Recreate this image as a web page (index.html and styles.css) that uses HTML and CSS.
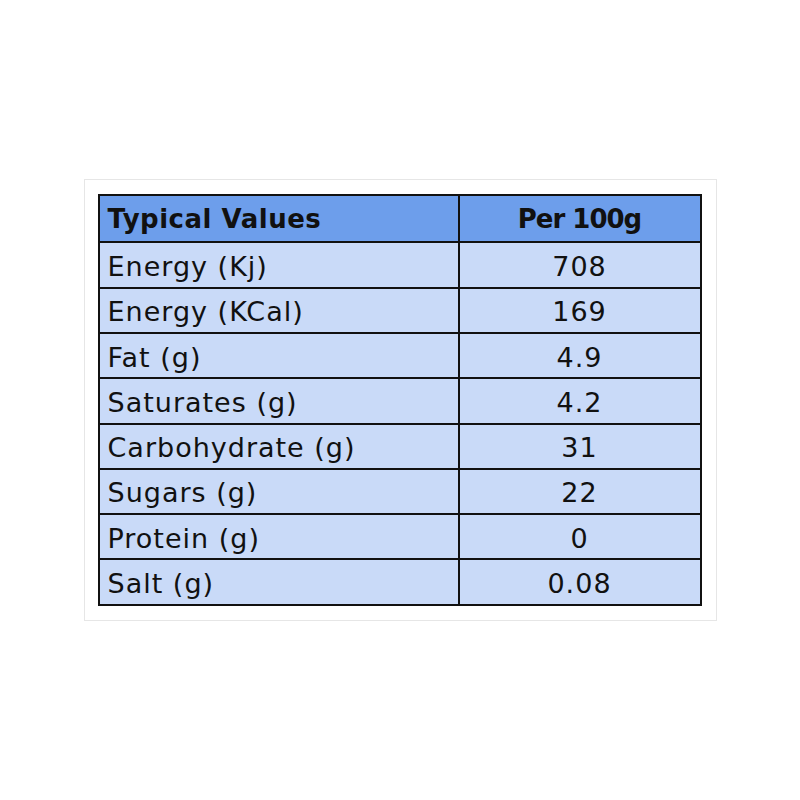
FILE: index.html
```html
<!DOCTYPE html>
<html>
<head>
<meta charset="utf-8">
<link rel="stylesheet" href="styles.css">
</head>
<body>
<div class="card">
  <table class="nutrition">
    <thead>
      <tr><th class="label">Typical Values</th><th class="value">Per 100g</th></tr>
    </thead>
    <tbody>
      <tr><td class="label">Energy (Kj)</td><td class="value">708</td></tr>
      <tr><td class="label">Energy (KCal)</td><td class="value">169</td></tr>
      <tr><td class="label">Fat (g)</td><td class="value">4.9</td></tr>
      <tr><td class="label">Saturates (g)</td><td class="value">4.2</td></tr>
      <tr><td class="label">Carbohydrate (g)</td><td class="value">31</td></tr>
      <tr><td class="label">Sugars (g)</td><td class="value">22</td></tr>
      <tr><td class="label">Protein (g)</td><td class="value">0</td></tr>
      <tr><td class="label">Salt (g)</td><td class="value">0.08</td></tr>
    </tbody>
  </table>
</div>
</body>
</html>
```
FILE: styles.css
```css
html, body {
  margin: 0;
  padding: 0;
  background: #ffffff;
}
body {
  height: 800px;
  display: flex;
  align-items: center;
  justify-content: center;
  font-family: "DejaVu Sans", "Liberation Sans", sans-serif;
  color: #111111;
}
.card {
  border: 1px solid #e6e6e6;
  padding: 14px 14px 14px 13px;
  background: #ffffff;
}
.nutrition {
  width: 604px;
  border-collapse: collapse;
  border: 2px solid #111111;
}
.nutrition th,
.nutrition td {
  border: 2px solid #111111;
  padding: 0 8px;
  line-height: 1;
  vertical-align: middle;
}
.nutrition th {
  height: 45px;
  background: #6d9eeb;
  font-size: 26px;
  font-weight: 700;
}
.nutrition th.label {
  letter-spacing: 0.5px;
}
.nutrition th.value {
  letter-spacing: -1px;
}
.nutrition td {
  height: 40.3px;
  padding-top: 3px;
  background: #c9daf8;
  font-size: 27px;
  font-weight: 400;
  letter-spacing: 1px;
}
.nutrition .label {
  width: 342px;
  text-align: left;
}
.nutrition .value {
  text-align: center;
}
```
